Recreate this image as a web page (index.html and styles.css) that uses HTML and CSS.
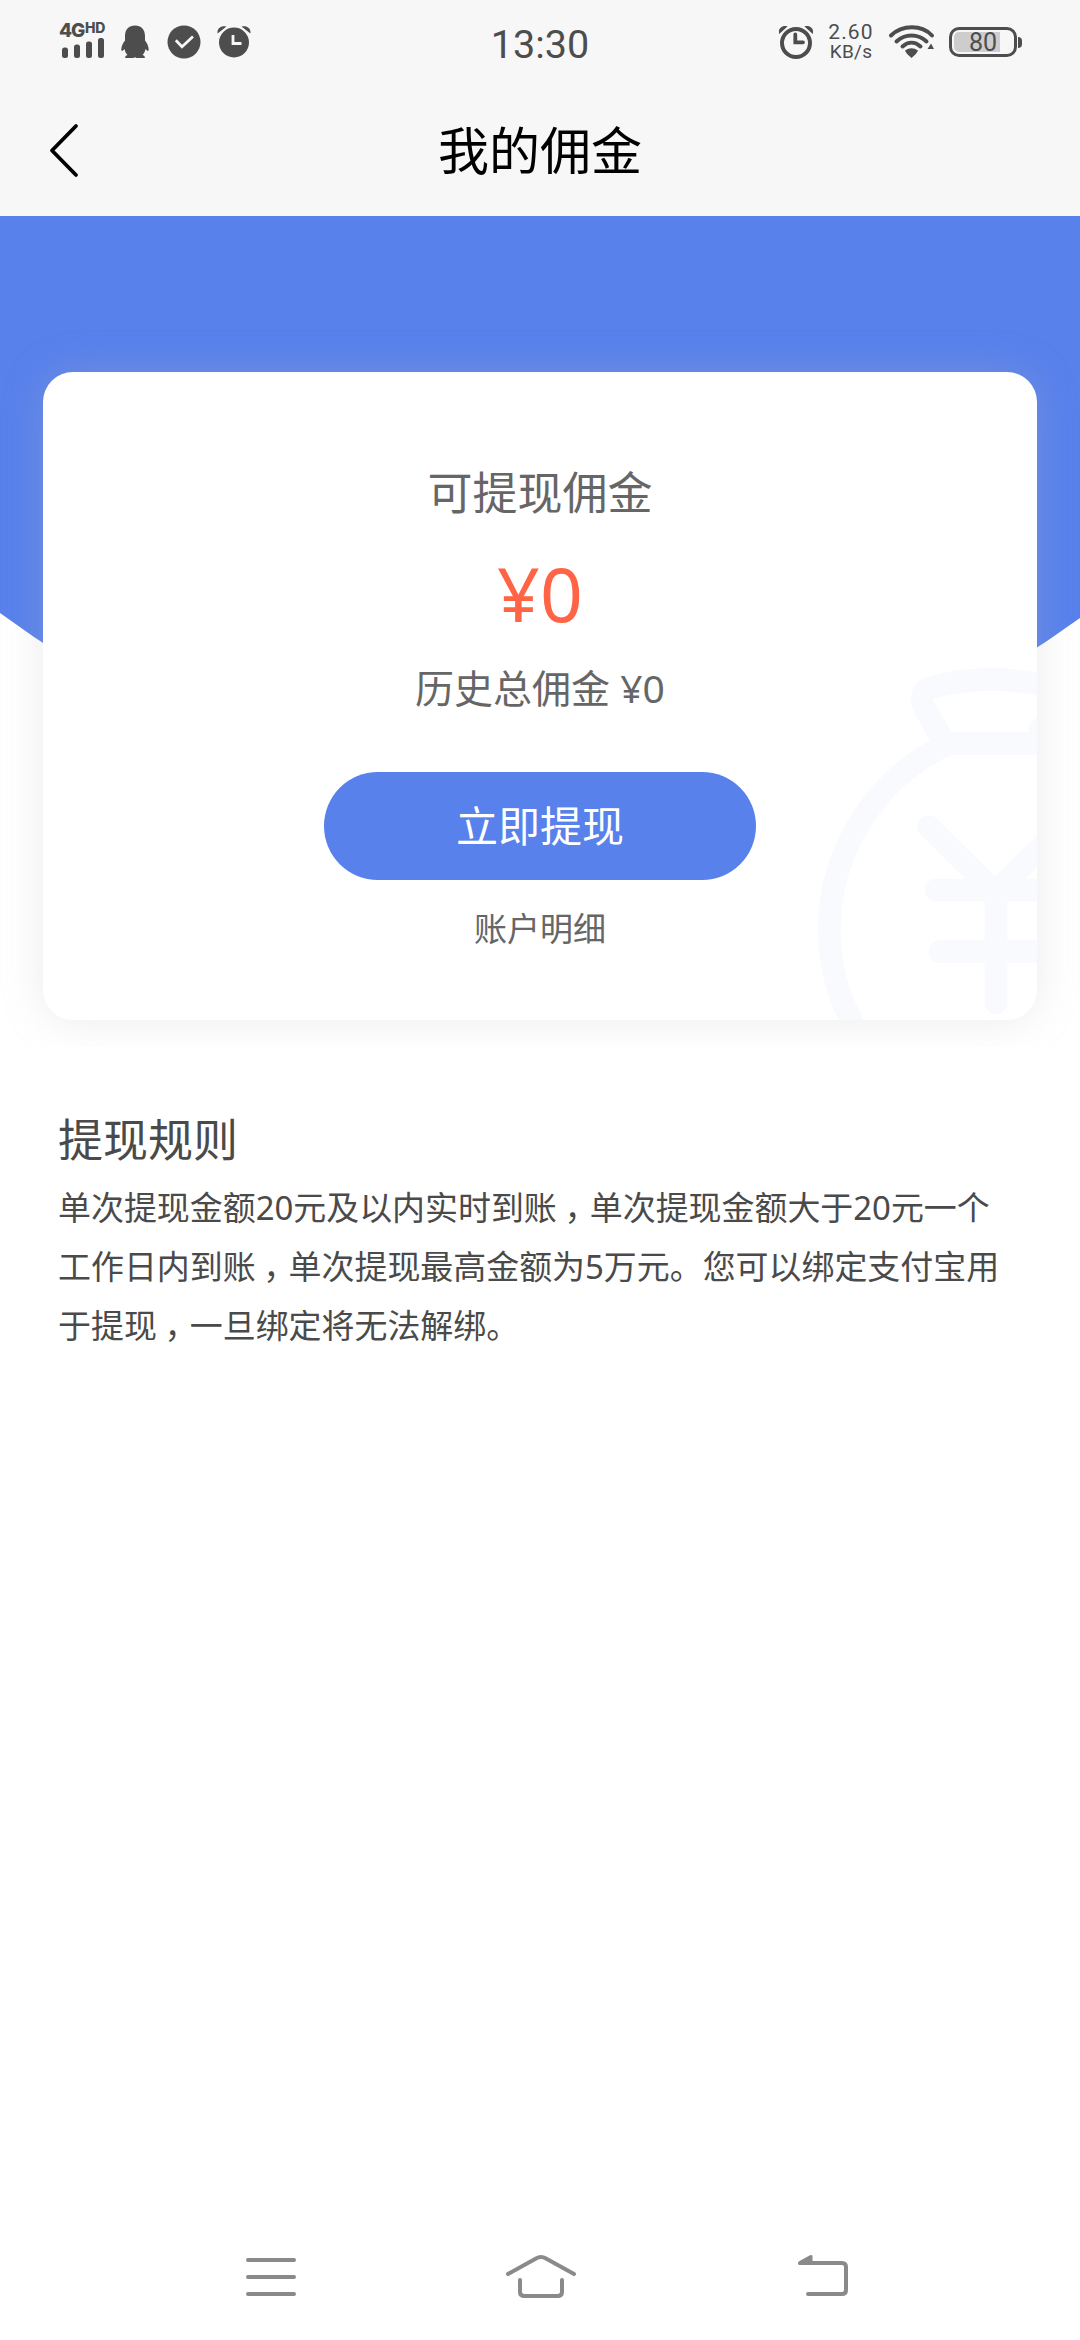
FILE: index.html
```html
<!DOCTYPE html>
<html lang="zh-CN">
<head>
<meta charset="utf-8">
<title>我的佣金</title>
<link rel="stylesheet" href="styles.css">
</head>
<body>
<div class="screen">
  <header class="top">
    <div class="status">
      <div class="status-left">
        <div class="signal">
          <div class="net"><span class="net-4g">4G</span><span class="net-hd">HD</span></div>
          <svg class="bars" width="44" height="20" viewBox="0 0 44 20"><g fill="#4d4d4d"><rect x="2" y="9.500" width="6" height="10.500" rx="2.500"/><rect x="14" y="6.500" width="6" height="13.500" rx="2.500"/><rect x="26" y="3.500" width="6" height="16.500" rx="2.500"/><rect x="38" y="0" width="6" height="20" rx="2.500"/></g></svg>
        </div>
        <svg class="qq" width="28" height="34" viewBox="0 0 28 34"><path fill="#4d4d4d" d="M14 .5C8 .5 4 4.500 4 11V15.500C2 18 .3 21.500 .3 24.500C.3 26 1 26.200 2 25.500L3.500 24C4 26.500 5 28.500 6.500 30C4.500 30.500 4 31.500 4.200 33H12.500L14 32.300L15.500 33H23.800C24 31.500 23.500 30.500 21.500 30C23 28.500 24 26.500 24.500 24L26 25.500C27 26.200 27.700 26 27.700 24.500C27.700 21.500 26 18 24 15.500V11C24 4.500 20 .5 14 .5Z"/></svg>
        <svg class="check" width="34" height="34" viewBox="0 0 34 34"><circle cx="17" cy="17" r="16.500" fill="#4d4d4d"/><path d="M8.800 15.300L15 21.800L26 11.500" fill="none" stroke="#f7f7f7" stroke-width="2.700"/></svg>
        <svg class="alarm" width="34" height="34" viewBox="0 0 34 34"><path fill="#4d4d4d" d="M.6 8.500C-.2 3.500 4 .2 9.500 1.600ZM33.400 8.500C34.200 3.500 30 .2 24.500 1.600Z"/><circle cx="17" cy="17.500" r="16" fill="#f7f7f7"/><circle cx="17" cy="17.500" r="15" fill="#4d4d4d"/><path d="M16 10V18.500H24.500" fill="none" stroke="#f7f7f7" stroke-width="2.800"/></svg>
      </div>
      <div class="clock">13:30</div>
      <div class="status-right">
        <svg width="36" height="36" viewBox="0 0 36 36"><path fill="#4d4d4d" d="M1.200 10C-.2 4.500 4 .8 9.500 2.400ZM34.800 10C36.200 4.500 32 .8 26.500 2.400Z"/><circle cx="18" cy="19" r="16.800" fill="#f7f7f7"/><circle cx="18" cy="19" r="14" fill="none" stroke="#4d4d4d" stroke-width="4"/><path d="M17.300 10.500V18.300H25" fill="none" stroke="#4d4d4d" stroke-width="3.800" stroke-linecap="round"/></svg>
        <div class="speed"><span>2.60</span><span>KB/s</span></div>
        <svg class="wifi" width="48" height="36" viewBox="0 0 48 36"><g fill="none" stroke="#4d4d4d" stroke-width="4" stroke-linecap="round"><path d="M3 11.500C14 .5 34 .5 44 11.500"/><path d="M8.500 17.500C17 9.500 30 9.500 38.500 17.500"/><path d="M14.500 22.500C20 17.500 27 17.500 32.500 22.500"/></g><path fill="#4d4d4d" d="M17 26.500Q23.500 22 30 26.500Q29 29.500 23.500 34Q18 29.500 17 26.500ZM39.500 25H46L43 19.500Z"/></svg>
        <div class="battery"><div class="level">80</div></div>
      </div>
    </div>
    <div class="titlebar">
      <svg width="32" height="56" viewBox="0 0 32 56"><path d="M28 4L4 28.500L28 53" fill="none" stroke="#000" stroke-width="3.800" stroke-linecap="round" stroke-linejoin="round"/></svg>
      <h1>我的佣金</h1>
    </div>
  </header>
  <main>
    <section class="hero">
      <svg class="hero-bg" width="1080" height="600" viewBox="0 0 1080 600"><path fill="#5881ec" d="M0 0H1080V402Q540 790 0 397Z"/></svg>
      <div class="card">
        <svg class="bag" width="257" height="420" viewBox="0 0 771 1260"><g fill="none" stroke="#f9fafe" stroke-width="68" stroke-linecap="round" stroke-linejoin="round"><path d="M800 260Q640 215 455 262C424 270 420 300 435 326L494 430"/><path d="M850 431H506C300 525 148 740 148 990C148 1110 178 1200 225 1280"/><path d="M780 390L840 326"/><path d="M446 680L646 878L846 680M468 870H830M480 1055H830M648 880V1208"/></g></svg>
        <p class="label">可提现佣金</p>
        <p class="amount">¥0</p>
        <p class="history">历史总佣金 ¥0</p>
        <button class="withdraw">立即提现</button>
        <a class="details">账户明细</a>
      </div>
    </section>
    <section class="rules">
      <h2>提现规则</h2>
      <p>单次提现金额20元及以内实时到账<span class="comma">，</span>单次提现金额大于20元一个<br>工作日内到账<span class="comma">，</span>单次提现最高金额为5万元。您可以绑定支付宝用<br>于提现<span class="comma">，</span>一旦绑定将无法解绑。</p>
    </section>
  </main>
  <nav class="navbar">
    <svg width="52" height="48" viewBox="0 0 52 48"><path d="M3 7H49M3 24H49M3 41H49" stroke="#8a8a8a" stroke-width="4" stroke-linecap="round"/></svg>
    <svg width="72" height="48" viewBox="0 0 72 48"><g fill="none" stroke="#8a8a8a" stroke-width="4" stroke-linecap="round"><path d="M3 21L31 5.500Q36 2.500 41 5.500L69 21"/><path d="M15 27V39Q15 43 19.500 43H52.500Q57 43 57 39V27"/></g></svg>
    <svg width="52" height="48" viewBox="0 0 52 48"><path d="M5 10H45Q49 10 49 14V37Q49 41 45 41H11" fill="none" stroke="#8a8a8a" stroke-width="4" stroke-linecap="round"/><path fill="#8a8a8a" d="M1 11Q.5 9 2.500 8L13 2.200Q15.500 1.500 15.500 3.500V12H2Z"/></svg>
  </nav>
</div>
</body>
</html>
```

FILE: styles.css
```css
* { box-sizing: border-box; }
body, h1, h2, p { margin: 0; font-weight: 400; }
body {
  background: #fff;
  font-family: "Noto Sans", "Noto Sans CJK SC", sans-serif;
}
svg { display: block; flex: none; }

.screen {
  width: 1080px;
  height: 2340px;
  display: flex;
  flex-direction: column;
}

.top { height: 216px; background: #f7f7f7; flex: none; }

.status {
  height: 84px;
  padding: 0 59px 0 59px;
  display: grid;
  grid-template-columns: 1fr auto 1fr;
  grid-template-rows: 84px;
  align-items: center;
  color: #4d4d4d;
  font-family: Inter, Roboto, sans-serif;
}
.status-left { display: flex; align-items: center; }
.signal { width: 48px; height: 36px; margin-top: -4px; }
.net { height: 16px; display: flex; font-weight: 800; white-space: nowrap; }
.net-4g { width: 26px; font-size: 19px; line-height: 17px; letter-spacing: -1px; }
.net-hd { font-size: 14px; line-height: 12px; letter-spacing: -0.2px; }
.bars { margin-left: 1px; }
.qq { margin-left: 14px; }
.check { margin-left: 18px; }
.alarm { margin-left: 16px; }
.clock {
  align-self: start;
  font-family: Roboto, sans-serif;
  font-size: 39.5px;
  line-height: 90px;
}
.status-right { display: flex; align-items: center; justify-content: flex-end; }
.speed {
  width: 48px;
  margin-left: 13px;
  display: flex;
  flex-direction: column;
  align-items: center;
  font-family: Roboto, sans-serif;
  font-size: 21px;
  line-height: 20px;
}
.speed span:first-child { letter-spacing: 1.2px; }
.speed span:last-child { font-size: 19px; letter-spacing: 0.3px; }
.wifi { margin-left: 13px; }
.battery {
  position: relative;
  width: 68px;
  height: 30px;
  margin: 0 4px 0 13px;
  padding: 2px;
  border: 3px solid #4d4d4d;
  border-radius: 10px;
}
.battery::after {
  content: "";
  position: absolute;
  left: 66px;
  top: 7px;
  width: 4px;
  height: 11px;
  border-radius: 0 4px 4px 0;
  background: #4d4d4d;
}
.level {
  width: 46px;
  height: 20px;
  padding-left: 15px;
  border-radius: 5px 0 0 5px;
  background: #cdcdcd;
  font-family: Roboto, sans-serif;
  font-size: 25px;
  line-height: 21px;
}

.titlebar {
  height: 132px;
  padding: 0 48px;
  display: grid;
  grid-template-columns: 1fr auto 1fr;
  align-items: center;
}
.titlebar h1 { font-size: 51px; line-height: 132px; color: #000; }

.hero {
  position: relative;
  height: 831px;
  padding: 156px 43px 0;
  overflow: hidden;
}
.hero-bg { position: absolute; left: 0; top: 0; }
.card {
  position: relative;
  height: 648px;
  padding-top: 90px;
  border-radius: 30px;
  background: #fff;
  box-shadow: 0 0 42px rgba(180, 180, 180, 0.27);
  display: flex;
  flex-direction: column;
  align-items: center;
  color: #666;
}
.bag {
  position: absolute;
  right: 0;
  bottom: 0;
  border-radius: 0 0 30px 0;
}
.label { font-size: 45px; line-height: 62px; }
.amount { margin-top: 27px; font-size: 75px; line-height: 84px; color: #ff6446; }
.history { margin-top: 25px; font-size: 39px; line-height: 56px; }
.withdraw {
  width: 432px;
  height: 108px;
  margin-top: 56px;
  padding: 0;
  border: 0;
  border-radius: 54px;
  background: #5881ec;
  color: #fff;
  font: 42px/108px "Noto Sans", "Noto Sans CJK SC", sans-serif;
}
.details { margin-top: 26px; font-size: 33px; line-height: 46px; }

.rules { padding: 62px 58px 0; color: #4a4a4a; }
.rules h2 { font-size: 45px; line-height: 62px; }
.rules p { margin-top: 7px; font-size: 32.95px; line-height: 59.2px; white-space: nowrap; }
.comma {
  margin: 0 0.27em 0 0.23em;
  font-feature-settings: "halt";
}

.navbar {
  height: 126px;
  margin-top: auto;
  padding: 39px 0 0 245px;
  display: grid;
  grid-template-columns: 260px 292px 52px;
}
```
